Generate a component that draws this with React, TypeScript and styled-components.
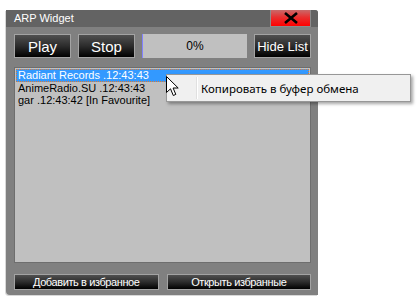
import React from "react";
import styled, { createGlobalStyle } from "styled-components";

const GlobalStyle = createGlobalStyle`
  html, body {
    margin: 0;
    padding: 0;
    background: #ffffff;
    font-family: "Liberation Sans", Arial, sans-serif;
  }
`;

interface Station {
  text: string;
  selected?: boolean;
}

const stations: Station[] = [
  { text: "Radiant Records .12:43:43", selected: true },
  { text: "AnimeRadio.SU .12:43:43" },
  { text: "gar .12:43:42 [In Favourite]" },
];

function App() {
  return (
    <>
      <GlobalStyle />
      <Page>
        <Window>
          <TitleBar>
            <Title>ARP Widget</Title>
            <CloseButton>
              <svg width="18" height="12" viewBox="0 0 18 12">
                <path d="M3 1 L15 11 M15 1 L3 11" stroke="#000" strokeWidth="2.6" />
              </svg>
            </CloseButton>
          </TitleBar>
          <Body>
            <Toolbar>
              <DarkButton $size={15}>Play</DarkButton>
              <DarkButton $size={15}>Stop</DarkButton>
              <Progress>0%</Progress>
              <DarkButton $size={13}>Hide List</DarkButton>
            </Toolbar>
            <List>
              {stations.map((s, i) => (
                <Row key={i} $selected={s.selected}>
                  {s.text}
                </Row>
              ))}
            </List>
            <Footer>
              <FooterButton>Добавить в избранное</FooterButton>
              <FooterButton>Открыть избранные</FooterButton>
            </Footer>
          </Body>
        </Window>

        <Cursor width="13" height="21" viewBox="0 0 13 21">
          <path
            d="M0.5 0.5 L0.5 16.5 L4.5 12.8 L7.3 19.5 L9.8 18.4 L7.1 12 L12.2 12 Z"
            fill="#fff"
            stroke="#000"
            strokeWidth="1"
          />
        </Cursor>

        <ContextMenu>
          <MenuGutter />
          <MenuItem>Копировать в буфер обмена</MenuItem>
        </ContextMenu>
      </Page>
    </>
  );
}

const Page = styled.div`
  position: relative;
  width: 419px;
  height: 301px;
  padding: 10px 0 0 6px;
  box-sizing: border-box;
`;

const Window = styled.div`
  display: flex;
  flex-direction: column;
  width: 312px;
  height: 285px;
  background: #808080;
  border-radius: 0 3px 0 4px;
  box-shadow: -1px 1px 0 #d8d8d8;
  overflow: hidden;
`;

const TitleBar = styled.div`
  display: flex;
  align-items: flex-start;
  justify-content: space-between;
  height: 17px;
  padding: 0 7px 0 8px;
  background: #636363;
`;

const Title = styled.div`
  padding-top: 2px;
  color: #ffffff;
  font-size: 11px;
`;

const CloseButton = styled.div`
  display: flex;
  align-items: center;
  justify-content: center;
  width: 39px;
  height: 16px;
  border: 1px solid #8c8c8c;
  border-top: none;
  background: linear-gradient(#c86a6a 0%, #e83030 45%, #ff0000 100%);
`;

const Body = styled.div`
  display: flex;
  flex-direction: column;
  flex: 1;
  padding: 7px 7px 5px 8px;
`;

const Toolbar = styled.div`
  display: flex;
  gap: 7px;
  height: 24px;
`;

const DarkButton = styled.div<{ $size: number }>`
  display: flex;
  align-items: center;
  justify-content: center;
  width: 55px;
  border: 1px solid #a3a3a3;
  background: linear-gradient(#505050 0%, #2c2c2c 50%, #000000 100%);
  color: #ffffff;
  font-size: ${(p) => p.$size}px;
`;

const Progress = styled.div`
  display: flex;
  align-items: center;
  justify-content: center;
  width: 104px;
  border-left: 1px solid #8080ff;
  background: #c0c0c0;
  color: #000000;
  font-size: 12px;
`;

const List = styled.div`
  display: flex;
  flex-direction: column;
  height: 196px;
  margin-top: 9px;
  padding: 1px;
  box-sizing: border-box;
  background: #c0c0c0;
  border: 1px solid #6e6e6e;
`;

const Row = styled.div<{ $selected?: boolean }>`
  height: 12.5px;
  padding-left: 2px;
  line-height: 12px;
  font-size: 11px;
  white-space: nowrap;
  color: ${(p) => (p.$selected ? "#ffffff" : "#000000")};
  background: ${(p) => (p.$selected ? "#3399ff" : "transparent")};
  outline: ${(p) => (p.$selected ? "1px dotted #e07a2e" : "none")};
  outline-offset: -1px;
`;

const Footer = styled.div`
  display: flex;
  gap: 8px;
  height: 16px;
  margin-top: 11px;
`;

const FooterButton = styled.div`
  display: flex;
  align-items: center;
  justify-content: center;
  flex: 1;
  border: 1px solid #a3a3a3;
  background: linear-gradient(#505050 0%, #2c2c2c 50%, #000000 100%);
  color: #ffffff;
  font-size: 11px;
  letter-spacing: -0.4px;
`;

const Cursor = styled.svg`
  position: absolute;
  left: 166px;
  top: 76px;
  z-index: 3;
`;

const ContextMenu = styled.div`
  position: absolute;
  left: 166px;
  top: 74px;
  display: flex;
  align-items: stretch;
  width: 245px;
  height: 28px;
  box-sizing: border-box;
  border: 1px solid #979797;
  background: #f0f0f0;
  box-shadow: 2px 2px 3px rgba(0, 0, 0, 0.35);
  z-index: 2;
`;

const MenuGutter = styled.div`
  width: 29px;
  margin: 2px 0;
  border-right: 1px solid #e0e0e0;
  box-shadow: 1px 0 0 #ffffff;
`;

const MenuItem = styled.div`
  display: flex;
  align-items: center;
  padding-left: 4px;
  font-family: "Noto Sans", "Open Sans", sans-serif;
  font-size: 11.5px;
  color: #000000;
`;

export default App;
